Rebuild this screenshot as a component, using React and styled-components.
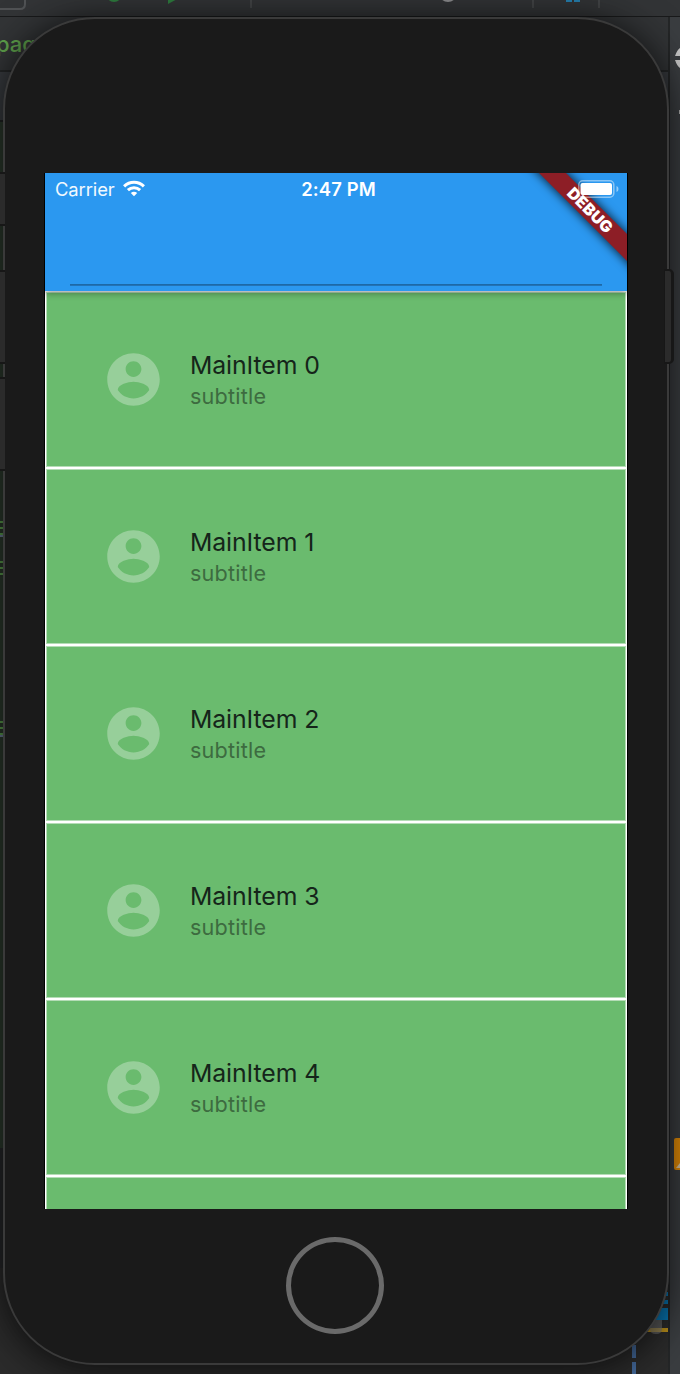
import React from 'react';
import styled, { createGlobalStyle } from 'styled-components';

const GlobalStyle = createGlobalStyle`
  *, *::before, *::after { box-sizing: border-box; }
  body { margin: 0; background: #2c2e30; font-family: Inter, "Liberation Sans", sans-serif; }
`;

const Desktop = styled.div`
  position: relative;
  width: 680px;
  height: 1374px;
  overflow: hidden;
  padding: 17px 0 0 3px;
`;

/* Editor window behind the simulator */
const Ide = styled.div`
  position: absolute;
  inset: 0;
  display: flex;
  flex-direction: column;
  background: #323436;
`;

const Toolbar = styled.div`
  flex: none;
  height: 17px;
  border-bottom: 1px solid #191a1b;
  background: #323436;
  svg { display: block; }
`;

const Workspace = styled.div`
  flex: 1;
  min-height: 0;
  display: flex;
`;

const Editor = styled.div`
  flex: 1;
  display: flex;
  flex-direction: column;
  border-right: 2px solid #242627;
`;

const Tab = styled.div`
  height: 55px;
  padding: 12px 0 0;
  border-bottom: 2px solid #242627;
  color: #5fa14c;
  font-size: 22px;
  font-weight: 500;
  line-height: 30px;
  text-indent: -4px;
`;

const Strip = styled.div`
  height: ${(p) => p.$h}px;
  flex: none;
  background: ${(p) => p.$bg};
  border-bottom: ${(p) => (p.$line ? '2px solid #1f2122' : '0')};
  overflow: hidden;
`;

const CodeMark = styled.div`
  width: 5px;
  height: 16px;
  margin-top: ${(p) => p.$gap}px;
  background: repeating-linear-gradient(#58994b 0 2px, #2a382b 2px 6px);
  border-bottom: ${(p) => (p.$link ? '2px solid #6a7a93' : '0')};
`;

const Minimap = styled.svg`
  display: block;
  margin-left: auto;
`;

const Sidebar = styled.div`
  width: 10px;
  background: #3a3d40;
  svg { display: block; }
`;

const Phone = styled.div`
  position: relative;
  width: 666px;
  height: 1348px;
  border: 2px solid #3a3a3a;
  border-radius: 92px;
  background: #1a1a1a;
  box-shadow: 0 6px 40px 2px rgba(0, 0, 0, 0.5), 0 0 26px rgba(0, 0, 0, 0.28);
  display: flex;
  flex-direction: column;
  align-items: center;
  padding: 154px 0 0;
`;

const SideButton = styled.div`
  position: absolute;
  top: ${(p) => p.$top}px;
  ${(p) => (p.$right ? 'right: -7px;' : 'left: -9px;')}
  width: ${(p) => (p.$right ? 10 : 9)}px;
  height: ${(p) => p.$h}px;
  background: #2b2b2b;
  border: solid #171717;
  border-width: ${(p) => (p.$right ? '2px 3px 2px 1px' : '2px 0')};
  border-radius: ${(p) => (p.$right ? '0 5px 5px 0' : '0')};
`;

const Screen = styled.div`
  width: 584px;
  height: 1036px;
  border: solid #000;
  border-width: 0 1px;
  background: #fff;
  overflow: hidden;
`;

const AppBar = styled.header`
  position: relative;
  z-index: 1;
  height: 118px;
  background: #2b98f0;
  box-shadow: 0 2px 7px rgba(0, 0, 0, 0.4);
  display: flex;
  flex-direction: column;
  justify-content: space-between;
`;

const StatusBar = styled.div`
  position: relative;
  z-index: 2;
  display: grid;
  grid-template-columns: 1fr auto 1fr;
  align-items: center;
  height: 31px;
  padding: 0 8px 0 10px;
  color: #fff;
  font-size: 18.4px;
`;

const Carrier = styled.div`
  display: flex;
  align-items: center;
  gap: 8px;
  letter-spacing: -0.1px;
  color: #f1f8fe;
`;

const Clock = styled.div`
  font-weight: 600;
  letter-spacing: 0.15px;
  padding-left: 3px;
`;

const Battery = styled.svg`
  justify-self: end;
`;

const FieldLine = styled.div`
  height: 2px;
  margin: 0 25px 5px;
  background: linear-gradient(#1d69a7 50%, #2273b7 50%);
`;

/* Clips the diagonal ribbon to the app bar */
const BannerClip = styled.div`
  position: absolute;
  inset: 0;
  z-index: 1;
  overflow: hidden;
`;

const DebugBanner = styled.div`
  position: absolute;
  top: 28px;
  right: -63px;
  width: 200px;
  height: 19px;
  transform: rotate(45deg);
  background: #8d1e26;
  box-shadow: 0 0 10px 1px rgba(0, 0, 0, 0.75);
  color: #fff;
  font-size: 16px;
  font-weight: 900;
  letter-spacing: 0.3px;
  line-height: 19px;
  text-align: center;
`;

const Item = styled.div`
  height: 177px;
  display: flex;
  align-items: center;
  padding-left: 56px;
  border: 1px solid #fff;
  background: #6abb6e;
  box-shadow: inset 0 0 0 1px #b4dcb6;
`;

const Avatar = styled.svg`
  width: 63px;
  height: 63px;
  margin-right: 25px;
  fill: #97cf9a;
`;

const ItemText = styled.div``;

const Title = styled.div`
  color: #15251a;
  font-size: 24.8px;
  letter-spacing: -0.1px;
  line-height: 32px;
  white-space: nowrap;
`;

const Subtitle = styled.div`
  color: #3d6b40;
  font-size: 21.6px;
  letter-spacing: 0.2px;
  line-height: 30px;
`;

const HomeButton = styled.div`
  width: 98px;
  height: 97px;
  margin: 28px 2px 0 0;
  border: 5px solid #6a6a6a;
  border-radius: 50%;
`;

function Backdrop() {
  return (
    <Ide>
      <Toolbar>
        <svg width="680" height="16">
          <path d="M-4 9H20q5 0 5-5V-2" fill="none" stroke="#505254" strokeWidth="2" />
          <circle cx="114" cy="-6" r="8" fill="#2f7c3f" />
          <path d="M168-6V4L181-3Z" fill="#2f7c3f" />
          <path d="M251 0V8M533 0V8M599 0V8" stroke="#424446" strokeWidth="2" />
          <circle cx="448" cy="-7" r="9" fill="#8a8b8d" />
          <path d="M566 0h6v2h-6ZM574 0h6v2h-6Z" fill="#267fae" />
        </svg>
      </Toolbar>
      <Workspace>
        <Editor>
          <Tab>pag</Tab>
          <Strip $h={50} $bg="#383b3f" $line />
          <Strip $h={1026} $bg="#2c3a2d">
            <CodeMark $gap={399} $link />
            <CodeMark $gap={24} />
            <CodeMark $gap={144} $link />
          </Strip>
          <Strip $h={120} $bg="#262729" />
          <Strip $h={106} $bg="#2b2b2b">
            <Minimap width="60" height="106">
              <path d="M40 24H60V28H40ZM40 32H60V36H40ZM30 40H60V52H30Z" fill="#0876b3" />
              <path d="M30 60H60V64H30Z" fill="#b88e1b" />
              <path d="M42 52h12v9q0 5-6 5t-6-5Z" fill="#777" fillOpacity=".6" />
              <path d="M24 77h4v13h-4ZM24 94h4v12h-4Z" fill="#44699a" />
            </Minimap>
          </Strip>
        </Editor>
        <Sidebar>
          <svg width="10" height="1357">
            <path d="M5 39Q7 33 10 31V39ZM5 43Q7 49 10 51V43Z" fill="#c4c4c4" />
            <path d="M9 93h1v4h-1Z" fill="#aaa" />
            <path d="M6 1121h4v32H6q-2 0-2-2v-28q0-2 2-2Z" fill="#e08a08" />
            <path d="M6 1151l4-5v5Z" fill="#d9c4a0" />
          </svg>
        </Sidebar>
      </Workspace>
    </Ide>
  );
}

function WifiIcon() {
  return (
    <svg width="22" height="17" viewBox="0 0 22 17" fill="none" stroke="#fff" strokeWidth="3.1">
      <path d="M1.1 6.3C6.8.9 15.2.9 20.9 6.3" />
      <path d="M4.9 10.1C8.4 6.9 13.6 6.9 17.1 10.1" />
      <path d="M11 16.3L7.8 13Q11 10.4 14.2 13Z" fill="#fff" stroke="none" />
    </svg>
  );
}

export default function App() {
  return (
    <Desktop>
      <GlobalStyle />
      <Backdrop />
      <Phone>
        <SideButton $top={153} $h={54} />
        <SideButton $top={251} $h={94} />
        <SideButton $top={358} $h={94} />
        <SideButton $top={250} $h={95} $right />
        <Screen>
          <AppBar>
            <StatusBar>
              <Carrier>
                Carrier
                <WifiIcon />
              </Carrier>
              <Clock>2:47 PM</Clock>
              <Battery width="41" height="18" viewBox="0 0 41 18">
                <rect x="0.8" y="0.8" width="35" height="16.4" rx="4" fill="none" stroke="#fff" strokeOpacity="0.45" strokeWidth="1.5" />
                <rect x="2.5" y="3" width="31.5" height="12" rx="2" fill="#fff" />
                <path d="M38.5 6q2 .7 2 3t-2 3Z" fill="#fff" fillOpacity="0.5" />
              </Battery>
            </StatusBar>
            <FieldLine />
            <BannerClip>
              <DebugBanner>DEBUG</DebugBanner>
            </BannerClip>
          </AppBar>
          {[0, 1, 2, 3, 4].map((n) => (
            <Item key={n}>
              <Avatar viewBox="0 0 24 24">
                <path d="M12 2C6.48 2 2 6.48 2 12s4.48 10 10 10 10-4.48 10-10S17.52 2 12 2zm0 3c1.66 0 3 1.34 3 3s-1.34 3-3 3-3-1.34-3-3 1.34-3 3-3zm0 14.2c-2.5 0-4.71-1.28-6-3.22.03-1.99 4-3.08 6-3.08 1.99 0 5.97 1.09 6 3.08-1.29 1.94-3.5 3.22-6 3.22z" />
              </Avatar>
              <ItemText>
                <Title>MainItem {n}</Title>
                <Subtitle>subtitle</Subtitle>
              </ItemText>
            </Item>
          ))}
          <Item />
        </Screen>
        <HomeButton />
      </Phone>
    </Desktop>
  );
}
